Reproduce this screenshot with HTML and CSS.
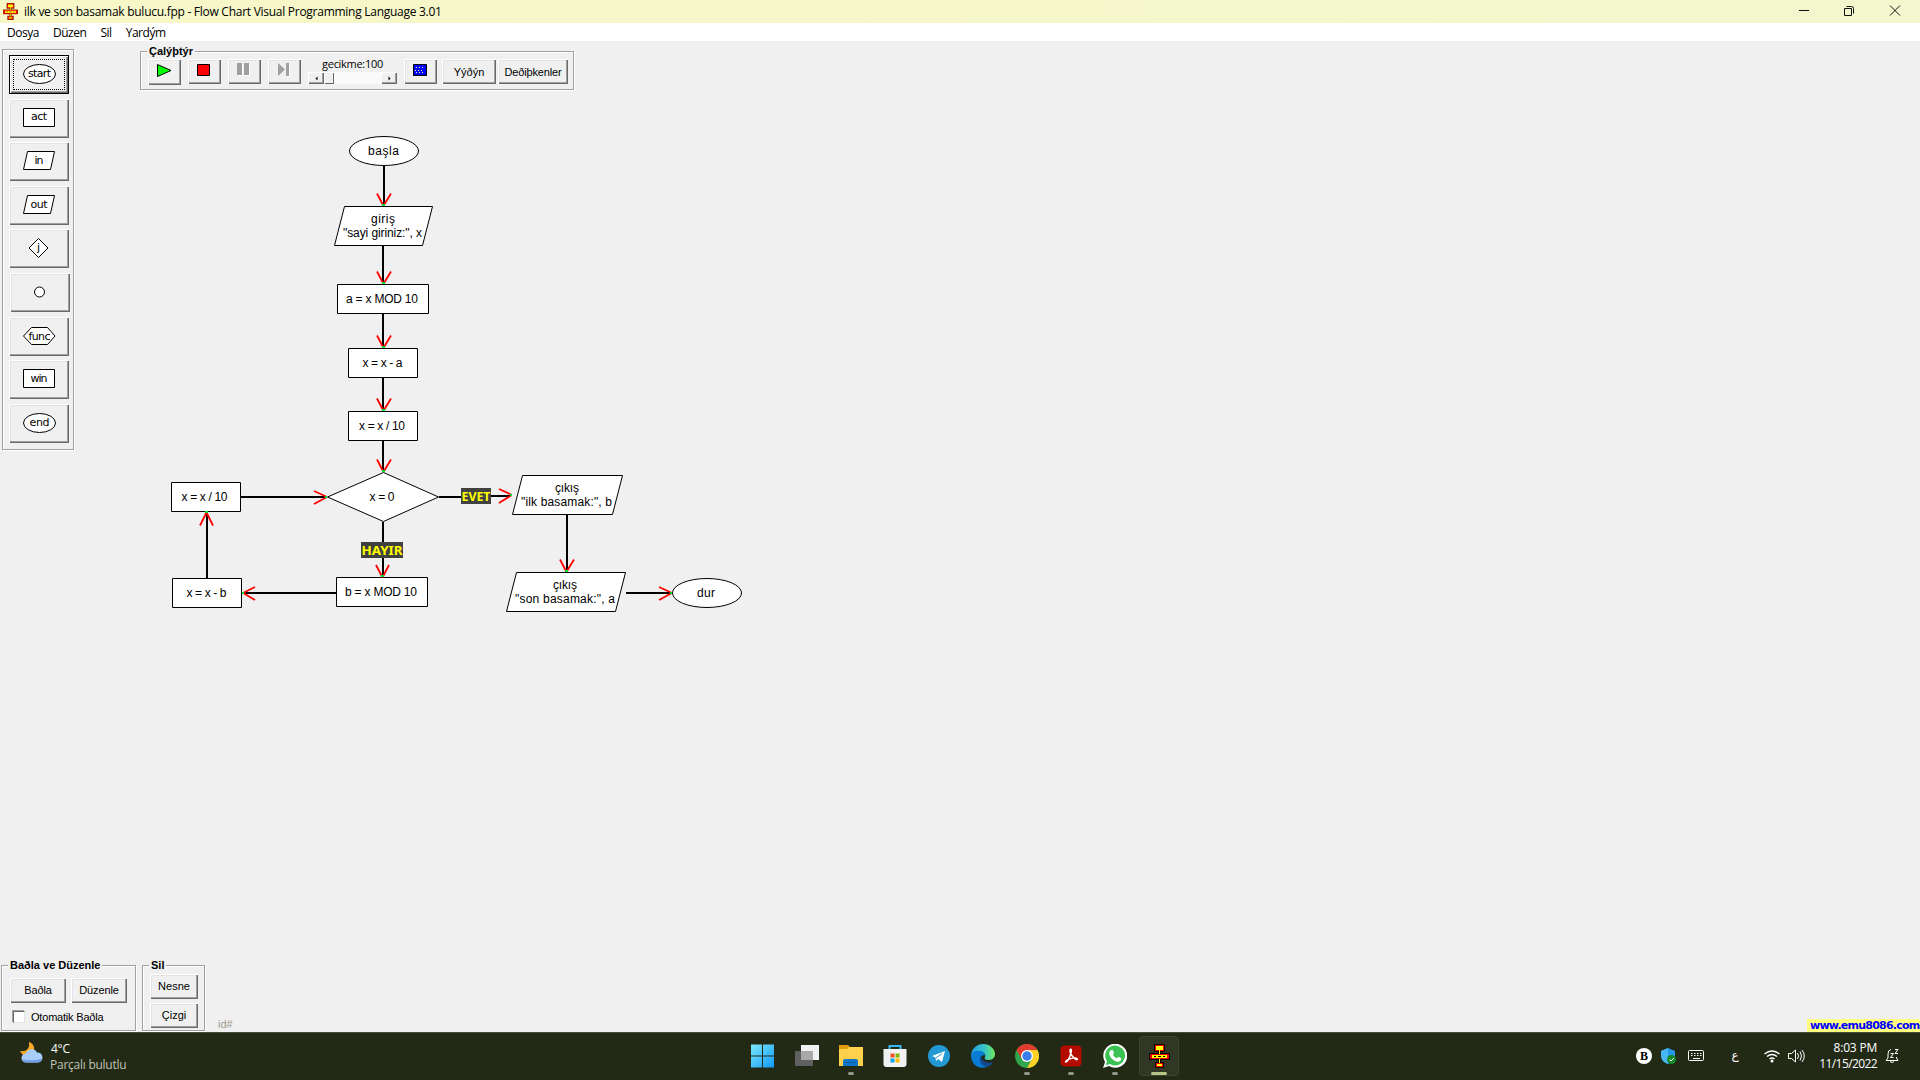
FILE: index.html
```html
<!DOCTYPE html>
<html lang="tr">
<head>
<meta charset="utf-8">
<title>ilk ve son basamak bulucu.fpp - Flow Chart Visual Programming Language 3.01</title>
<link rel="stylesheet" href="styles.css">
</head>
<body>
<svg class="defs" width="0" height="0">
  <symbol id="plane" viewBox="0 0 21 24">
    <path fill="currentColor" d="M5 0h11v8h-4v1h9v7h-9v2h3v6H6v-6h3v-2H0V9h9V8H5z"/>
    <path fill="#f00000" d="M6 1h9v6H6zM1 10h19v5H1zM7 19h7v4H7z"/>
    <path fill="#ff0" d="M7 2h7v4H7zM10 6h1v4h-1zM3 11h15v3H3zM10 15h1v4h-1zM8 20h5v2H8z"/>
    <path fill="currentColor" d="M5 12h2v1H5zM9 12h3v1H9zM14 12h2v1h-2z"/>
  </symbol>
</svg>
<div class="screen">
  <header class="titlebar">
    <svg class="app-icon" width="15" height="17"><use href="#plane"/></svg>
    <span class="title">ilk ve son basamak bulucu.fpp - Flow Chart Visual Programming Language 3.01</span>
    <svg class="window-buttons" width="104" height="12" fill="none" stroke="#111"><path d="M1 5.500h10"/><path d="M46.500 3.500h7v7h-7zM48.500 1.500h5q2 0 2 2v5"/><path d="M92 .5l10 10M102 .5l-10 10"/></svg>
  </header>
  <nav class="menu"><span>Dosya</span><span>Düzen</span><span>Sil</span><span>Yardým</span></nav>

  <main class="workspace">
    <div class="top">
      <aside class="toolbox">
        <button class="btn tool selected"><svg width="33" height="20"><ellipse cx="16.500" cy="10" rx="16" ry="9.500"/><text x="16.500" y="13" textLength="23">start</text></svg></button>
        <button class="btn tool"><svg width="33" height="20"><path d="M.5.500h31v18H.5z"/><text x="16" y="12" textLength="16">act</text></svg></button>
        <button class="btn tool"><svg width="33" height="20"><path d="M4.500 .5h27l-4 18H.5z"/><text x="16" y="13" textLength="9">in</text></svg></button>
        <button class="btn tool"><svg width="33" height="20"><path d="M4.500 .5h27l-4 18H.5z"/><text x="16" y="13" textLength="17">out</text></svg></button>
        <button class="btn tool"><svg width="33" height="20"><path d="M15.500 .5l9.500 9.500-9.500 9.500L6 10z"/><text x="15.500" y="13">j</text></svg></button>
        <button class="btn tool joint"><svg width="33" height="20"><circle cx="16.500" cy="10" r="5"/></svg></button>
        <button class="btn tool"><svg width="33" height="20"><path d="M8.500 1.500h16l7.500 8.500-7.500 8.500h-16L.5 10z"/><text x="16.500" y="14" textLength="22">func</text></svg></button>
        <button class="btn tool"><svg width="33" height="20"><path d="M.5.500h31v18H.5z"/><text x="16" y="13" textLength="17">win</text></svg></button>
        <button class="btn tool"><svg width="33" height="20"><ellipse cx="16.500" cy="10" rx="16" ry="9.500"/><text x="16.500" y="13" textLength="20">end</text></svg></button>
      </aside>

      <section class="group run">
        <span class="legend">Çalýþtýr</span>
        <button class="btn play"><svg width="16" height="14"><path d="M1.500 .5v12L15 6.500z" fill="#0f0" stroke="#000"/></svg></button>
        <button class="btn ctl"><svg width="13" height="13"><path d="M.5.500h12v11H.5z" fill="#f00" stroke="#000"/></svg></button>
        <button class="btn ctl"><svg width="13" height="14" fill="#a0a0a0"><path fill="#fff" d="M1 1h5v12H1zM8 1h5v12H8z"/><path d="M0 0h5v12H0zM7 0h5v12H7z"/></svg></button>
        <button class="btn ctl"><svg width="13" height="14" fill="#a0a0a0"><path fill="#fff" d="M12 1h1v13h-3v-1h2z"/><path d="M1 0l7 6.500L1 13zM9 0h3v13H9z"/></svg></button>
        <div class="delay"><span class="delay-label">gecikme:100</span>
          <div class="scroll"><span class="cap"><svg width="3" height="5"><path d="M2.500 .5v4L.5 2.500z"/></svg></span><span class="thumb"></span><span class="cap end"><svg width="3" height="5"><path d="M.5 .5v4l2-2z"/></svg></span></div>
        </div>
        <button class="btn ctl"><svg width="14" height="12"><path d="M.5.500h13v11H.5z" fill="#00f" stroke="#000"/><path d="M3 3.500h9M2 6.500h9M3 8.500h9" stroke="#ff9" stroke-dasharray="1 2"/></svg></button>
        <button class="btn stack">Yýðýn</button>
        <button class="btn vars">Deðiþkenler</button>
      </section>
    </div>

    <svg class="flow" width="600" height="500" viewBox="160 120 600 500">
      <g class="wires">
        <path d="M384 165V204M383 246V283M383 314V347M383 378V410M383 441V470M383 522V575M567 515V570M207 578V514"/>
        <path d="M241 497H325M439 497H461M491 496H510M336 593H244M626 593H670"/>
      </g>
      <g class="nodes">
        <ellipse cx="384" cy="151" rx="34.500" ry="14.500"/>
        <path d="M344.500 206.500h88l-10 39h-88z"/>
        <path d="M337.500 284.500h91v29h-91zM348.500 348.500h69v29h-69zM348.500 411.500h69v29h-69z"/>
        <path d="M327.500 497l56-24.500 55 24.500-55 24.500z"/>
        <path d="M171.500 482.500h69v29h-69zM172.500 578.500h69v29h-69zM336.500 577.500h91v29h-91z"/>
        <path d="M522.500 475.500h100l-10 39h-100zM516.500 572.500h109l-10 39h-109z"/>
        <ellipse cx="707" cy="593" rx="34.500" ry="14.500"/>
      </g>
      <g class="heads">
        <path d="M377 193.500l6 11.500h1l7-11.500M377 271.500l6 11.500h1l7-11.500M377 335.500l6 11.500h1l7-11.500M377 398.500l6 11.500h1l7-11.500M377 459.500l6 11.500h1l7-11.500M376 565l6 11.500h1l6-11.500M560 559.500l6 11.500h1l7-11.500M200 525.500l6-12h1l6 12"/>
        <path d="M314 491l12 5.500v1l-12 6.500M499 489l12 5.500v1l-12 7.500M255 587l-11 5.500v1l11 6.500M659 587l12 5.500v1l-12 6.500"/>
      </g>
      <path class="ports" d="M382 205h3M382 283h3M382 347h3M382 410h3M382 471h3M381 576h3M565 571h3M205 512h3M325 497h2M510 495h2M242 593h2M670 593h2"/>
      <g class="labels">
        <text x="368" y="155" textLength="31">başla</text>
        <text x="371" y="223" textLength="24">giriş</text><text x="343" y="237" textLength="79">"sayi giriniz:", x</text>
        <text x="346" y="303" textLength="72">a = x MOD 10</text>
        <text x="362.500" y="367" textLength="40">x = x - a</text>
        <text x="359" y="430" textLength="46">x = x / 10</text>
        <text x="369.500" y="501" textLength="25">x = 0</text>
        <text x="181.500" y="501" textLength="46">x = x / 10</text>
        <text x="186.500" y="597" textLength="40">x = x - b</text>
        <text x="345" y="596" textLength="72">b = x MOD 10</text>
        <text x="555" y="492" textLength="24">çıkış</text><text x="521" y="506" textLength="91">"ilk basamak:", b</text>
        <text x="553" y="589" textLength="24">çıkış</text><text x="515" y="603" textLength="100">"son basamak:", a</text>
        <text x="697" y="597" textLength="18">dur</text>
      </g>
      <g class="branches">
        <rect x="361" y="542" width="42" height="16"/><text x="361.500" y="555" textLength="41" lengthAdjust="spacingAndGlyphs">HAYIR</text>
        <rect x="461" y="488" width="30" height="16"/><text x="461.500" y="501" textLength="29" lengthAdjust="spacingAndGlyphs">EVET</text>
      </g>
    </svg>

    <footer class="bottom">
      <section class="group connect">
        <span class="legend">Baðla ve Düzenle</span>
        <div class="pair"><button class="btn wide">Baðla</button><button class="btn wide">Düzenle</button></div>
        <label class="auto"><span class="check"></span>Otomatik Baðla</label>
      </section>
      <section class="group delete">
        <span class="legend">Sil</span>
        <button class="btn del">Nesne</button>
        <button class="btn del">Çizgi</button>
      </section>
      <span class="ident">id#</span>
      <a class="site">www.emu8086.com</a>
    </footer>
  </main>

  <div class="taskbar">
    <div class="weather">
      <svg width="26" height="24" viewBox="0 0 26 24"><path d="M11 1c1 6-2 10-9 9 2 5 9 8 13 2 3-5 0-10-4-11z" fill="#f9a825"/><path d="M8 21.500a4.500 4.500 0 0 1 0-9 6 6 0 0 1 11-1 5 5 0 0 1 1 10z" fill="#a9cdfa"/><path d="M4 18.500q2 3 5 3h10q4 0 5.500-4-8 3-20.500 1z" fill="#729fe8"/></svg>
      <div class="weather-text"><span>4°C</span><span class="dim">Parçalı bulutlu</span></div>
    </div>
    <div class="apps">
      <div class="app"><svg viewBox="0 0 24 24"><defs><linearGradient id="w" x2="1" y2="1"><stop stop-color="#7ceafd"/><stop offset="1" stop-color="#1198f5"/></linearGradient></defs><path fill="url(#w)" d="M0 .5h11v11H0zM12 .5h11v11H12zM0 12.500h11v11H0zM12 12.500h11v11H12z"/></svg></div>
      <div class="app"><svg viewBox="0 0 24 24"><path fill="#f1f1f1" d="M6 1h18v15H6z"/><path fill="#606060" d="M0 7h18v15H0z"/><path fill="#a9a9a9" d="M6 7h12v9H6z"/></svg></div>
      <div class="app on"><svg viewBox="0 0 24 24"><path fill="#e29b0c" d="M0 1h9l2 2v5H0z"/><path fill="#ffd04c" d="M0 5h8l2-2h14v19H0z"/><path fill="#0f75c9" d="M4 22v-5q0-2 2-2h11q2 0 2 2v5z"/><path fill="#0a5aa0" d="M7 18h9v1H7z"/></svg></div>
      <div class="app"><svg viewBox="0 0 24 24"><path d="M6.500 6V2h11v4" fill="none" stroke="#35b8f1" stroke-width="2"/><path fill="#f2f2f2" d="M.5 5h23v15q0 3-3 3h-17q-3 0-3-3z"/><path fill="#f25022" d="M7.500 9.500h4v4h-4z"/><path fill="#7fba00" d="M12.500 9.500h4v4h-4z"/><path fill="#00a4ef" d="M7.500 14.500h4v4h-4z"/><path fill="#ffb900" d="M12.500 14.500h4v4h-4z"/></svg></div>
      <div class="app"><svg viewBox="0 0 24 24"><circle cx="12" cy="12" r="11" fill="#2299d3"/><path fill="#fff" d="M5 12l13-5-3 11-4-3-2 2-.5-3.500z"/><path stroke="#2299d3" d="M9 14l6-4.500"/></svg></div>
      <div class="app"><svg viewBox="0 0 24 24"><defs><linearGradient id="e" x2="1"><stop stop-color="#239ae3"/><stop offset=".55" stop-color="#36c5ca"/><stop offset="1" stop-color="#6fe85b"/></linearGradient></defs><path fill="url(#e)" d="M0 11C1 4 6 0 12 0c7 0 12 5 12 10 0 4-3 6-7 6-3 0-4-1-3-3 1-3-1-5-4-5-4 0-8 2-10 3z"/><path fill="#087bd5" d="M0 11C2 7 6 6 9 7c3 0 5 2 5 4-3 0-5 2-4 6 1 3 4 5 6 6C7 26 0 20 0 11z"/><path fill="#124b91" d="M10 11c-3 6 0 11 6 12 3-1 5-3 6-5-5 2-12 0-12-7z"/></svg></div>
      <div class="app on"><svg viewBox="0 0 24 24"><circle cx="12" cy="12" r="12" fill="#31a64c"/><path fill="#e33b2e" d="M1.600 6A12 12 0 0 1 22.400 6H12L6.800 15z"/><path fill="#fdd023" d="M22.400 6A12 12 0 0 1 12 24l5.200-9L12 6z"/><circle cx="12" cy="12" r="6" fill="#fff"/><circle cx="12" cy="12" r="4.700" fill="#397ee8"/></svg></div>
      <div class="app on"><svg viewBox="0 0 24 24"><rect x="1.500" y="1.500" width="21" height="21" rx="4" fill="#b30b00"/><path d="M6.500 18c-1-2 11-6 12-3 0 3-8-4-7.500-9 1-2 2 0 1 3-1 4-4 10-5.500 9z" fill="none" stroke="#fff" stroke-width="1.400"/></svg></div>
      <div class="app on"><svg viewBox="0 0 24 24"><path fill="#fff" d="M0 24l2-6A12 12 0 1 1 6 22z"/><path fill="#3ac252" d="M2.800 21.200l1.200-4A9.900 9.900 0 1 1 7 20z"/><path fill="#fff" d="M8 6l2 .3 1 3-1.200 1.500q1.500 2.500 4 3.500l1.500-1.500 3 1.500q0 3-3 3.500C10 17.500 5 12 6.500 7.500z"/></svg></div>
      <div class="app active"><svg class="plane" viewBox="0 0 21 24"><use href="#plane"/></svg></div>
    </div>
    <div class="tray">
      <svg width="175" height="24" viewBox="0 0 175 24" fill="none" stroke="#fff"><circle cx="8" cy="12" r="8" fill="#fff" stroke="none"/><path d="M32 4l7 3v5q0 5-7 8-7-3-7-8V7z" fill="#2697e6" stroke="none"/><path d="M32 4v16q-7-3-7-8V7z" fill="#48b6f2" stroke="none"/><circle cx="35.500" cy="15.500" r="4.500" fill="#138a25" stroke="none"/><path d="M33.500 15.500l1.500 1.500 3-3"/><rect x="52.500" y="6.500" width="15" height="10" rx="1"/><path d="M55 9.500h11M55 11.500h11" stroke-dasharray="1.500 1.500"/><path d="M57 14.500h7"/><path d="M128.500 10q7.500-6 15 0M131 12.500q5-4 10 0M133.500 15q2.500-2 5 0" stroke-width="1.400"/><circle cx="136" cy="17" r="1.500" fill="#fff" stroke="none"/><path d="M152.500 9.500h3l4-3.500v12l-4-3.500h-3zM161.500 9q2 3 0 6M164 7.500q3 4.500 0 9M166 6q4.500 6 0 12"/><text class="b-mark" x="8" y="16">B</text><text class="lang" x="99" y="15">ع</text></svg>
      <div class="clock"><span>8:03 PM</span><span>11/15/2022</span></div>
      <svg width="15" height="16" fill="none" stroke="#fff"><path d="M6 1.500Q3 2 3 6v4l-2 2.500h12l-1.500-2.500V9M5 13.500q2 2 4 0M5.500 5.500h3l-3 4h3M10 1.500h3l-3 4h3"/></svg>
    </div>
  </div>
</div>
</body>
</html>
```
FILE: styles.css
```css
* { box-sizing: border-box; }
body { margin: 0; background: #f0f0f0; font: 11px "Liberation Sans", Arial, sans-serif; color: #000; }
.defs { position: absolute; }
.screen { width: 1920px; height: 1080px; display: flex; flex-direction: column; overflow: hidden; }
svg { display: block; flex: none; }

.titlebar { height: 23px; flex: none; background: linear-gradient(90deg, #f7f7c8, #f3f7cd); display: flex; align-items: center; padding-left: 3px; font: 12px "Open Sans", "Noto Sans", sans-serif; }
.app-icon { margin-right: 6px; color: #8a2a00; }
.title { letter-spacing: -.27px; white-space: nowrap; }
.window-buttons { margin-left: auto; margin-right: 18px; margin-top: -2px; }
.menu { height: 18px; flex: none; background: #fff; display: flex; gap: 14px; padding: 1px 0 0 7px; align-items: center; font: 12px/17px "Open Sans", "Noto Sans", sans-serif; letter-spacing: -.47px; }

.workspace { height: 991px; flex: none; display: flex; flex-direction: column; }
.top { display: flex; height: 95px; flex: none; align-items: flex-start; }
.group { border: 1px solid #a0a0a0; box-shadow: 1px 1px #fff, inset 1px 1px #fff; position: relative; }
.legend { position: absolute; top: -8px; left: 6px; padding: 0 2px; background: #f0f0f0; font-weight: bold; line-height: 14px; white-space: nowrap; }
.btn { flex: none; border: 0; margin: 0; padding: 0; display: flex; align-items: center; justify-content: center; background: #f0f0f0; font: 11px "Liberation Sans", Arial, sans-serif; color: #000; box-shadow: inset 1px 1px #fff, inset -1px -1px #696969, inset -2px -2px #a0a0a0, inset 2px 2px #e3e3e3; }

.toolbox { width: 72px; height: 401px; margin: 8px 0 0 2px; padding: 5px 0 0 6px; border: 1px solid #a0a0a0; box-shadow: 1px 1px #fff, inset 1px 1px #fff; display: grid; grid-template-rows: 44px 43px 44px 43px 44px 44px 43px 44px 39px; align-content: start; }
.tool { width: 60px; height: 39px; padding: 9px 0 0 14px; align-items: flex-start; justify-content: flex-start; }
.tool svg { fill: #fff; stroke: #000; }
.tool text { fill: #000; stroke: none; text-anchor: middle; font: 11px "DejaVu Sans", sans-serif; }
.joint { margin-left: 1px; padding-left: 13px; }
.selected { border: 1px solid #000; outline: 1px dotted #000; outline-offset: -5px; padding: 8px 0 0 13px; }

.run { width: 434px; height: 39px; margin: 10px 0 0 66px; padding: 7px 0 0 7px; display: flex; align-items: flex-start; }
.run .btn { padding: 0 2px 3px 0; }
.play { width: 33px; height: 26px; margin-right: 7px; }
.ctl { width: 33px; height: 25px; margin-right: 7px; }
.delay { width: 89px; margin-right: 7px; margin-top: -7px; display: flex; flex-direction: column; align-items: center; }
.delay-label { height: 20px; padding-top: 5px; line-height: 14px; font-family: "Open Sans", sans-serif; letter-spacing: -.3px; }
.scroll { width: 89px; height: 12px; display: flex; background: #fafafa; }
.cap { width: 16px; height: 12px; display: flex; align-items: center; justify-content: center; background: #f0f0f0; box-shadow: inset 1px 1px #fff, inset -1px -1px #696969, inset -2px -2px #a0a0a0; }
.thumb { width: 10px; background: #f0f0f0; box-shadow: inset 1px 1px #fff, inset -1px -1px #696969; }
.end { margin-left: auto; }
.run .stack, .run .vars { height: 25px; padding: 1px 0 0; }
.stack { width: 54px; margin-left: -2px; margin-right: 2px; }
.vars { width: 70px; letter-spacing: -.15px; }

.flow { margin: -16px 0 0 160px; }
.wires { stroke: #000; stroke-width: 2; }
.nodes { fill: #fff; stroke: #000; }
.heads { fill: none; stroke: #f00; stroke-width: 1.800; }
.ports { stroke: #0d3; stroke-width: 2; }
.labels text { font: 12px "Liberation Sans", Arial, sans-serif; }
.branches rect { fill: #404040; }
.branches text { fill: #ff0; font: bold 13px "Noto Sans", "Open Sans", sans-serif; }

.bottom { margin-top: auto; height: 67px; display: flex; align-items: flex-start; }
.connect { width: 135px; height: 66px; margin-left: 1px; padding: 12px 0 0 8px; }
.pair { display: flex; gap: 5px; }
.wide { width: 56px; height: 25px; padding-bottom: 2px; letter-spacing: -.1px; }
.auto { display: flex; align-items: center; gap: 6px; margin: 7px 0 0 3px; height: 14px; white-space: nowrap; letter-spacing: -.2px; }
.check { width: 12px; height: 12px; background: #fff; border: 1px solid; border-color: #696969 #e3e3e3 #e3e3e3 #696969; box-shadow: -1px -1px #a0a0a0; }
.delete { width: 63px; height: 66px; margin-left: 6px; padding: 8px 0 0 7px; display: flex; flex-direction: column; gap: 4px; }
.del { width: 48px; height: 25px; padding-bottom: 2px; }
.ident { margin: 52px 0 0 13px; color: #a09890; line-height: 14px; }
.site { margin: 54px 0 0 auto; width: 113px; height: 13px; padding-left: 3px; background: #ffff80; color: #00f; font: bold 11px/13px "DejaVu Sans", sans-serif; letter-spacing: -.78px; white-space: nowrap; }

.taskbar { height: 48px; flex: none; background: #222a15; border-top: 1px solid #474c3c; display: grid; grid-template-columns: 741px 439px 740px; color: #fff; font: 12px/16px "Open Sans", "Noto Sans", sans-serif; }
.weather { display: flex; gap: 6px; padding: 8px 0 0 18px; }
.weather-text { display: flex; flex-direction: column; letter-spacing: -.25px; }
.weather-text span:first-child { margin-left: 1px; }
.dim { color: #bfc2b8; }
.apps { display: flex; align-items: flex-start; }
.app { width: 44px; height: 47px; padding: 11px 10px 0; flex: none; display: flex; flex-direction: column; gap: 4px; align-items: center; }
.app svg { width: 24px; height: 24px; }
.app .plane { width: 21px; height: 24px; color: #000; }
.on::after, .active::after { content: ""; width: 6px; height: 3px; flex: none; border-radius: 2px; background: #92968a; }
.active { width: 40px; height: 40px; margin: 3px 0 0 2px; padding-top: 7px; border: 1px solid #3d4431; border-radius: 4px; background: #303724; }
.active::after { width: 16px; background: #b9c486; }
.tray { display: flex; justify-content: flex-end; padding: 7px 20px 0 0; }
.tray > svg { margin-top: 4px; }
.tray > svg:last-child { margin-top: 8px; }
.clock { width: 58px; margin: 0 8px; display: flex; flex-direction: column; align-items: flex-end; letter-spacing: -.6px; }
.clock span:first-child { letter-spacing: -.2px; }
.b-mark { font: bold 12px "Liberation Serif", serif; fill: #000; stroke: none; text-anchor: middle; }
.lang { font: 12px "DejaVu Sans", sans-serif; fill: #fff; stroke: none; text-anchor: middle; }
```
